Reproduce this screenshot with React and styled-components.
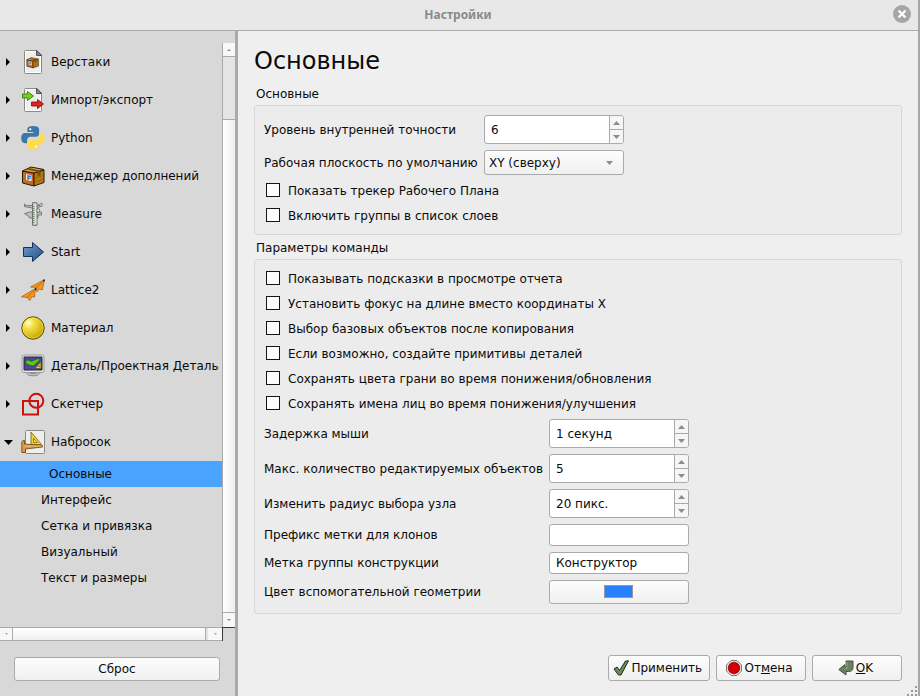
import React, { useState } from "react";
import styled, { createGlobalStyle, css } from "styled-components";

const Global = createGlobalStyle`
  * { box-sizing: border-box; }
  body { margin: 0; background: #efefef; color: #0a0a0a; font: 12px/19px "DejaVu Sans", sans-serif; }
  button, input, select { font: inherit; color: inherit; }
`;

const line = "#aaaaaa";
const raised = css`
  background: linear-gradient(#fdfdfd, #f0f0f0);
  border: 1px solid ${line};
  border-radius: 3px;
`;

const Dialog = styled.div`
  min-height: 100vh;
  display: flex;
  flex-direction: column;
  border-right: 2px solid #a6a6a6;
`;
const TitleBar = styled.header`
  height: 31px;
  display: grid;
  grid-template-columns: 1fr auto 1fr;
  align-items: center;
  padding: 0 7px 2px 5px;
  background: #e8e8e8;
  border-bottom: 1px solid ${line};
`;
const Title = styled.span`
  grid-column: 2;
  color: #8a8a8a;
  font-weight: bold;
  font-size: 12px;
  font-family: "Noto Sans", sans-serif;
`;
const CloseButton = styled.button`
  justify-self: end;
  width: 18px;
  height: 18px;
  padding: 0;
  border: 0;
  border-radius: 50%;
  background: #a5a5a5;
  svg { display: block; }
`;
const Body = styled.div`
  flex: 1;
  display: grid;
  grid-template-columns: 238px 1fr;
`;

const Sidebar = styled.aside`
  background: #d8d8d8;
  border-right: 3px solid ${line};
  padding-top: 12px;
  display: flex;
  flex-direction: column;
`;
const TreeArea = styled.div`
  flex: 1;
  display: grid;
  grid-template-columns: 1fr 13px;
  grid-template-rows: 1fr 14px;
`;
const Tree = styled.nav`
  min-width: 0;
  overflow: hidden;
`;
const Branch = styled.button`
  display: flex;
  align-items: center;
  width: 100%;
  height: 38px;
  padding: 0 0 0 3px;
  border: 0;
  background: none;
  text-align: left;
  white-space: nowrap;
`;
const Arrow = styled.svg`
  width: 12px;
  height: 12px;
  margin-right: 6px;
  flex: none;
`;
const Picture = styled.svg`
  width: 24px;
  height: 24px;
  margin-right: 6px;
  flex: none;
`;
const Leaf = styled.button`
  display: block;
  width: 100%;
  height: 26px;
  padding: 0 0 0 ${(p) => (p.$selected ? 49 : 41)}px;
  border: 0;
  background: ${(p) => (p.$selected ? "#4aa3ff" : "none")};
  text-align: left;
`;
const VScroll = styled.div`
  display: grid;
  grid-template-rows: 14px 62px 1fr 14px;
  background: #e4e4e4;
  border-left: 1px solid ${line};
`;
const VThumb = styled.div`
  grid-row: 3;
  background: linear-gradient(90deg, #fff, #ededed);
  border: solid ${line};
  border-width: 1px 0;
`;
const HScroll = styled.div`
  display: grid;
  grid-template-columns: 12px 1fr 2px 14px;
  background: #e4e4e4;
  border: solid ${line};
  border-width: 1px 0;
`;
const HThumb = styled.div`
  background: linear-gradient(#fff, #f0f0f0);
  border: solid ${line};
  border-width: 0 1px;
`;
const ScrollButton = styled.button`
  grid-row: ${(p) => p.$row || "auto"};
  grid-column: ${(p) => p.$column || "auto"};
  display: grid;
  place-items: center;
  padding: 0;
  border: 0;
  border-bottom: ${(p) => (p.$row === 1 ? `1px solid ${line}` : "0")};
  background: #f8f8f8;
`;
const Corner = styled.div`
  border: solid #3a3a3a;
  border-width: 1px 0 0 1px;
`;
const ResetButton = styled.button`
  ${raised}
  height: 24px;
  margin: 16px 15px 15px 14px;
  padding: 0;
`;

const Main = styled.main`
  background: #efefef;
  padding: 12px 16px 0;
  display: flex;
  flex-direction: column;
  line-height: 20px;
`;
const Heading = styled.h1`
  margin: 0;
  font-size: 24px;
  line-height: 36px;
  font-weight: normal;
`;
const Section = styled.section`
  margin-top: ${(p) => (p.$first ? 5 : 3)}px;
`;
const SectionTitle = styled.h2`
  margin: 0 0 1px 2px;
  font-size: 12px;
  line-height: 20px;
  font-weight: normal;
`;
const Panel = styled.div`
  padding: 9px;
  display: flex;
  flex-direction: column;
  gap: 6px;
  background: #ececec;
  border: 1px solid #d7d7d7;
  border-radius: 3px;
`;
const Fields = styled.div`
  display: grid;
  grid-template-columns: ${(p) => p.$label}px 140px;
  row-gap: 6px;
  align-items: center;
  white-space: nowrap;
`;
const Check = styled.label`
  display: flex;
  align-items: flex-start;
  gap: 8px;
  height: 19px;
  padding-left: 2px;
  input {
    appearance: none;
    width: 14px;
    height: 14px;
    margin: 2px 0 0;
    background: #fcfcfc;
    border: 1px solid #141414;
  }
  input:checked { background: #4aa3ff; }
`;
const Spin = styled.div`
  display: grid;
  grid-template-columns: 1fr 14px;
  height: 29px;
  background: #fff;
  border: 1px solid ${line};
  border-radius: 3px;
  overflow: hidden;
  input {
    min-width: 0;
    padding: 1px 6px 0;
    border: 0;
    background: none;
  }
`;
const Steps = styled.div`
  display: grid;
  grid-template-rows: 13px 14px;
  border-left: 1px solid ${line};
`;
const Step = styled.button`
  display: grid;
  place-items: center;
  padding: 0;
  border: 0;
  background: #f6f6f6;
  & + & { border-top: 1px solid ${line}; }
`;
const TextInput = styled.input`
  width: 100%;
  height: 22px;
  padding: 0 6px;
  background: #fff;
  border: 1px solid ${line};
  border-radius: 3px;
`;
const SelectBox = styled.div`
  ${raised}
  display: grid;
  align-items: center;
  height: 25px;
  > * { grid-area: 1 / 1; }
  svg { justify-self: end; margin-right: 10px; pointer-events: none; }
  select {
    appearance: none;
    width: 100%;
    height: 23px;
    padding: 1px 20px 0 4px;
    border: 0;
    background: none;
  }
`;
const ColorButton = styled.button`
  ${raised}
  display: grid;
  place-items: center;
  height: 24px;
  padding: 0 1px 1px 0;
`;
const Swatch = styled.span`
  width: 29px;
  height: 13px;
  background: #2a7fff;
  border: 1px solid #999;
`;
const Footer = styled.footer`
  display: flex;
  justify-content: flex-end;
  gap: 6px;
  margin-top: auto;
  padding-top: 20px;
`;
const ActionButton = styled.button`
  ${raised}
  display: flex;
  align-items: center;
  justify-content: center;
  gap: 2px;
  min-width: 90px;
  height: 26px;
  padding: 0 7px 0 4px;
  svg { flex: none; }
`;
const Grip = styled.svg`
  align-self: flex-end;
  margin: 5px -15px 0 0;
`;

const Glyph = ({ dir, w = 7, h = 4, fill = "#8c8c8c" }) => (
  <svg width={w} height={h} viewBox="0 0 8 4" preserveAspectRatio="none">
    <path d={dir === "up" ? "M0 4L4 0l4 4z" : "M0 0h8L4 4z"} fill={fill} />
  </svg>
);

const Sheet = () => (
  <>
    <path d="M3.500 1.500q0-1 1-1H16l4.500 4.500v17.500q0 1-1 1h-15q-1 0-1-1z" fill="#eeeeec" stroke="#888a85" />
    <path d="M4.500 1.500h11v4h4v17h-15z" fill="none" stroke="#fff" />
    <path d="M15.500 .5v5h5z" fill="#888a85" stroke="#2e3436" strokeWidth=".8" />
  </>
);
const Box = () => (
  <>
    <path d="M1.500 7L13 9v13L1.500 19z" fill="#b8741c" stroke="#2c1b02" />
    <path d="M13 9l10-3v12.500L13 22z" fill="#b8780f" stroke="#2c1b02" />
    <path d="M1.500 7L10 3l13 2.500L13 9z" fill="#d99c45" stroke="#2c1b02" />
    <path d="M5 5.300l11.500 2.500v4.500l3-1V6.700L8 4z" fill="#7a4a08" />
    <path d="M14 14l8-2.500M14 18l8-2.500" stroke="#8f5908" strokeWidth=".7" />
    <path d="M4.500 9.500l6.500 1.200v7L4.500 16.500z" fill="#f4f0ee" stroke="#e0453a" strokeWidth=".9" />
    <path d="M7 16v-4l3 .5M7 14l2.500.5" fill="none" stroke="#3d7cc5" strokeWidth="1.500" />
  </>
);

const pictures = {
  workbench: (
    <>
      <Sheet />
      <g transform="translate(5 6) scale(.54)"><Box /></g>
    </>
  ),
  transfer: (
    <>
      <Sheet />
      <path d="M1.500 6h5V3.500l6 4.500-6 4.500V10h-5z" fill="#73d216" stroke="#2d6b05" strokeWidth=".8" />
      <path d="M10.500 14h6v-2.500L22.500 16l-6 4.500V18h-6z" fill="#e5201f" stroke="#7d0505" strokeWidth=".8" />
    </>
  ),
  python: (
    <>
      <path d="M12 0C8 0 6.300 1.200 6.300 3.300V6h6v1H4C1.500 7 .2 9 .2 12s1.300 5.200 3.500 5.200h2.400v-3c0-2 1.600-3.500 3.500-3.500h5.500c1.700 0 3-1.400 3-3V3.300C18.100 1 15.500 0 12 0z" fill="#3b77a8" />
      <path d="M12.200 24c4 0 5.700-1.200 5.700-3.300V18h-6v-1h8.300c2.400 0 3.600-2 3.600-5s-1.200-5.200-3.400-5.200h-1.700v3c0 2-1.600 3.500-3.500 3.500H9.500c-1.700 0-3 1.400-3 3v4.400c0 2.300 2.200 3.300 5.700 3.300z" fill="#ffdc4f" />
      <circle cx="9.300" cy="3.300" r="1.100" fill="#fff" />
      <circle cx="15" cy="20.700" r="1.100" fill="#fff" />
    </>
  ),
  addons: <Box />,
  measure: (
    <>
      <path d="M3.500 2q1 1.500 3 1.500H20L17.500 6H11L3.500 4.500z" fill="#b9c0b9" stroke="#626862" strokeWidth=".8" />
      <path d="M21 1v3.500l-4-1.500z" fill="#d5dad5" stroke="#626862" strokeWidth=".7" />
      <path d="M3.500 11.500l5-1.500h12v3H17v3H8.500l-1-2z" fill="#b9c0b9" stroke="#626862" strokeWidth=".8" />
      <path d="M11.500 .7h4.500v22.600h-4.500z" fill="#ccd2cc" stroke="#626862" strokeWidth=".9" />
      <path d="M12.800 4v18" stroke="#4f554f" strokeDasharray="1 1" strokeWidth=".9" />
      <path d="M14.800 2v20" stroke="#eef0ee" strokeWidth=".8" />
      <path d="M16 7h2.500v3H16z" fill="#eef0ee" stroke="#626862" strokeWidth=".7" />
    </>
  ),
  start: <path d="M2.500 7.500h9v-5L22.500 12l-11 9.500v-5h-9z" fill="url(#blue)" stroke="#17305a" />,
  lattice: (
    <>
      <path d="M23.500 1.500L9.500 9l5 .6 1.500 4.400 2.300-3 3 1z" fill="#f7961e" stroke="#8a4d0e" strokeWidth=".6" />
      <path d="M14.500 10.500L.5 18.800l5.300.7L9 22.500l1.500-3.700 3 .2z" fill="#f7961e" stroke="#8a4d0e" strokeWidth=".6" />
      <path d="M23 2.500L15 10M14 11.500L6 19.500" stroke="#8a4d0e" strokeWidth=".6" />
      <circle cx="23" cy="2.500" r=".9" fill="#222" />
      <circle cx="14.500" cy="11" r=".9" fill="#222" />
    </>
  ),
  material: (
    <>
      <circle cx="12" cy="12" r="11.200" fill="url(#gold)" stroke="#4d4605" />
      <circle cx="12" cy="12" r="10.200" fill="none" stroke="#fce94f" strokeWidth=".7" opacity=".8" />
    </>
  ),
  part: (
    <>
      <ellipse cx="12" cy="19.500" rx="6" ry="2.300" fill="#c4c4c4" stroke="#888" />
      <path d="M9 18h6v2H9z" fill="#888" />
      <rect x="1" y="1" width="22" height="17.500" rx="2" fill="#e6e6e6" stroke="#9b9b9b" />
      <path d="M3 3h18v13H3z" fill="#4a4a94" stroke="#25254f" />
      <path d="M4.500 7l3-1 3 1.500 6.500-3 2 1-6.500 6.500-3-.5L5 9.500z" fill="#61c91b" stroke="#215706" strokeWidth=".7" />
      <path d="M14 14.500h6v-7z" fill="#e9cb3b" stroke="#5b4703" strokeWidth=".7" />
      <path d="M17 13h1.700v-2z" fill="#4a4a94" />
    </>
  ),
  sketch: (
    <g fill="none" stroke="#cc1111" strokeWidth="2">
      <circle cx="15.300" cy="8.800" r="7" />
      <path d="M2 9h15v13.500H2z" />
    </g>
  ),
  draft: (
    <>
      <rect x="4.500" y=".5" width="19" height="23" rx="1" fill="#eeeeec" stroke="#888a85" />
      <path d="M10 2v12.500h10.500z" fill="#edd42c" stroke="#77640a" strokeWidth=".8" />
      <path d="M12.500 8.500v4h3.700z" fill="#f7f3cf" stroke="#77640a" strokeWidth=".8" />
      <path d="M2 10.500h1.500V14l18 1.500V17L4.500 19v3.500H.8V12z" fill="#d79a48" stroke="#6b400b" strokeWidth=".8" />
      <path d="M3.500 16h17" stroke="#f0c078" />
    </>
  ),
};

const branches = [
  ["workbench", "Верстаки"],
  ["transfer", "Импорт/экспорт"],
  ["python", "Python"],
  ["addons", "Менеджер дополнений"],
  ["measure", "Measure"],
  ["start", "Start"],
  ["lattice", "Lattice2"],
  ["material", "Материал"],
  ["part", "Деталь/Проектная Деталь"],
  ["sketch", "Скетчер"],
  ["draft", "Набросок"],
];
const leaves = ["Основные", "Интерфейс", "Сетка и привязка", "Визуальный", "Текст и размеры"];
const commandChecks = [
  "Показывать подсказки в просмотре отчета",
  "Установить фокус на длине вместо координаты X",
  "Выбор базовых объектов после копирования",
  "Если возможно, создайте примитивы деталей",
  "Сохранять цвета грани во время понижения/обновления",
  "Сохранять имена лиц во время понижения/улучшения",
];

const Checkbox = ({ children }) => (
  <Check>
    <input type="checkbox" />
    {children}
  </Check>
);

function SpinField({ id, label, initial, unit = "" }) {
  const [value, setValue] = useState(initial);
  return (
    <>
      <label htmlFor={id}>{label}</label>
      <Spin>
        <input
          id={id}
          value={`${value}${unit}`}
          onChange={(e) => setValue(parseInt(e.target.value, 10) || 0)}
        />
        <Steps>
          <Step type="button" aria-label="Увеличить" onClick={() => setValue(value + 1)}>
            <Glyph dir="up" />
          </Step>
          <Step type="button" aria-label="Уменьшить" onClick={() => setValue(value - 1)}>
            <Glyph dir="down" />
          </Step>
        </Steps>
      </Spin>
    </>
  );
}

export default function App() {
  const [page, setPage] = useState("Основные");
  return (
    <Dialog>
      <Global />
      <TitleBar>
        <Title>Настройки</Title>
        <CloseButton type="button" aria-label="Закрыть">
          <svg width="18" height="18" viewBox="0 0 18 18">
            <path d="M5.500 5.500l7 7M12.500 5.500l-7 7" stroke="#fff" strokeWidth="2.400" />
          </svg>
        </CloseButton>
      </TitleBar>
      <Body>
        <Sidebar>
          <TreeArea>
            <Tree>
              {branches.map(([key, name]) => (
                <Branch key={key} type="button" aria-expanded={key === "draft"}>
                  <Arrow viewBox="0 0 12 12">
                    <path d={key === "draft" ? "M1 4h9L5.500 9z" : "M3 2v8l4-4z"} fill="#000" />
                  </Arrow>
                  <Picture viewBox="0 0 24 24">
                    <defs>
                      <linearGradient id="blue" x2="1" y2="1">
                        <stop stopColor="#729fcf" />
                        <stop offset="1" stopColor="#204a87" />
                      </linearGradient>
                      <radialGradient id="gold" cx=".3" cy=".28" r=".8">
                        <stop stopColor="#fffef0" />
                        <stop offset=".25" stopColor="#f8e64a" />
                        <stop offset="1" stopColor="#c4a000" />
                      </radialGradient>
                    </defs>
                    {pictures[key]}
                  </Picture>
                  {name}
                </Branch>
              ))}
              {leaves.map((name) => (
                <Leaf key={name} type="button" $selected={name === page} onClick={() => setPage(name)}>
                  {name}
                </Leaf>
              ))}
            </Tree>
            <VScroll>
              <ScrollButton type="button" aria-label="Вверх" $row={1}>
                <Glyph dir="up" w={4} h={2} />
              </ScrollButton>
              <VThumb />
              <ScrollButton type="button" aria-label="Вниз" $row={4}>
                <Glyph dir="down" w={4} h={2} />
              </ScrollButton>
            </VScroll>
            <HScroll>
              <ScrollButton type="button" aria-label="Влево" $column={1}>
                <Glyph dir="down" w={3} h={2} fill="#aaa" />
              </ScrollButton>
              <HThumb />
              <ScrollButton type="button" aria-label="Вправо" $column={4}>
                <Glyph dir="down" w={3} h={2} fill="#aaa" />
              </ScrollButton>
            </HScroll>
            <Corner />
          </TreeArea>
          <ResetButton type="button">Сброс</ResetButton>
        </Sidebar>
        <Main>
          <Heading>Основные</Heading>
          <Section $first>
            <SectionTitle>Основные</SectionTitle>
            <Panel>
              <Fields $label={220}>
                <SpinField id="precision" label="Уровень внутренней точности" initial={6} />
                <label htmlFor="plane">Рабочая плоскость по умолчанию</label>
                <SelectBox>
                  <select id="plane">
                    <option>XY (сверху)</option>
                  </select>
                  <Glyph dir="down" />
                </SelectBox>
              </Fields>
              <Checkbox>Показать трекер Рабочего Плана</Checkbox>
              <Checkbox>Включить группы в список слоев</Checkbox>
            </Panel>
          </Section>
          <Section>
            <SectionTitle>Параметры команды</SectionTitle>
            <Panel>
              {commandChecks.map((text) => (
                <Checkbox key={text}>{text}</Checkbox>
              ))}
              <Fields $label={285}>
                <SpinField id="delay" label="Задержка мыши" initial={1} unit=" секунд" />
                <SpinField id="max" label="Макс. количество редактируемых объектов" initial={5} />
                <SpinField id="radius" label="Изменить радиус выбора узла" initial={20} unit=" пикс." />
                <label htmlFor="clone">Префикс метки для клонов</label>
                <TextInput id="clone" />
                <label htmlFor="group">Метка группы конструкции</label>
                <TextInput id="group" defaultValue="Конструктор" />
                <label htmlFor="color">Цвет вспомогательной геометрии</label>
                <ColorButton id="color" type="button">
                  <Swatch />
                </ColorButton>
              </Fields>
            </Panel>
          </Section>
          <Footer>
            <ActionButton type="button">
              <svg width="16" height="16" viewBox="0 0 16 16">
                <path d="M1 9l3-2 2.500 3.500L12.500 1 15.500.8 8 15H5.500z" fill="#6f8a63" stroke="#1d2b18" />
              </svg>
              Применить
            </ActionButton>
            <ActionButton type="button">
              <svg width="16" height="16" viewBox="0 0 16 16">
                <path d="M5 .5h6L15.500 5v6L11 15.500H5L.5 11V5z" fill="#e8e8e6" stroke="#777" />
                <circle cx="8" cy="8" r="5.800" fill="#d40000" stroke="#900" strokeWidth=".8" />
              </svg>
              <span>От<u>м</u>ена</span>
            </ActionButton>
            <ActionButton type="button">
              <svg width="16" height="16" viewBox="0 0 16 16">
                <path d="M8 1h7v6.500q0 4-4.500 4H8V15L.8 9.500 7 4.500V7h1.500z" fill="#6b8060" stroke="#44543c" />
                <path d="M9 2v6.500H6.500" fill="none" stroke="#94a889" />
              </svg>
              <span><u>O</u>K</span>
            </ActionButton>
          </Footer>
          <Grip width="10" height="10" viewBox="0 0 10 10">
            <path d="M8 0h2v2H8zM4 4h2v2H4zM8 4h2v2H8zM0 8h2v2H0zM4 8h2v2H4zM8 8h2v2H8z" fill="#999" />
          </Grip>
        </Main>
      </Body>
    </Dialog>
  );
}
